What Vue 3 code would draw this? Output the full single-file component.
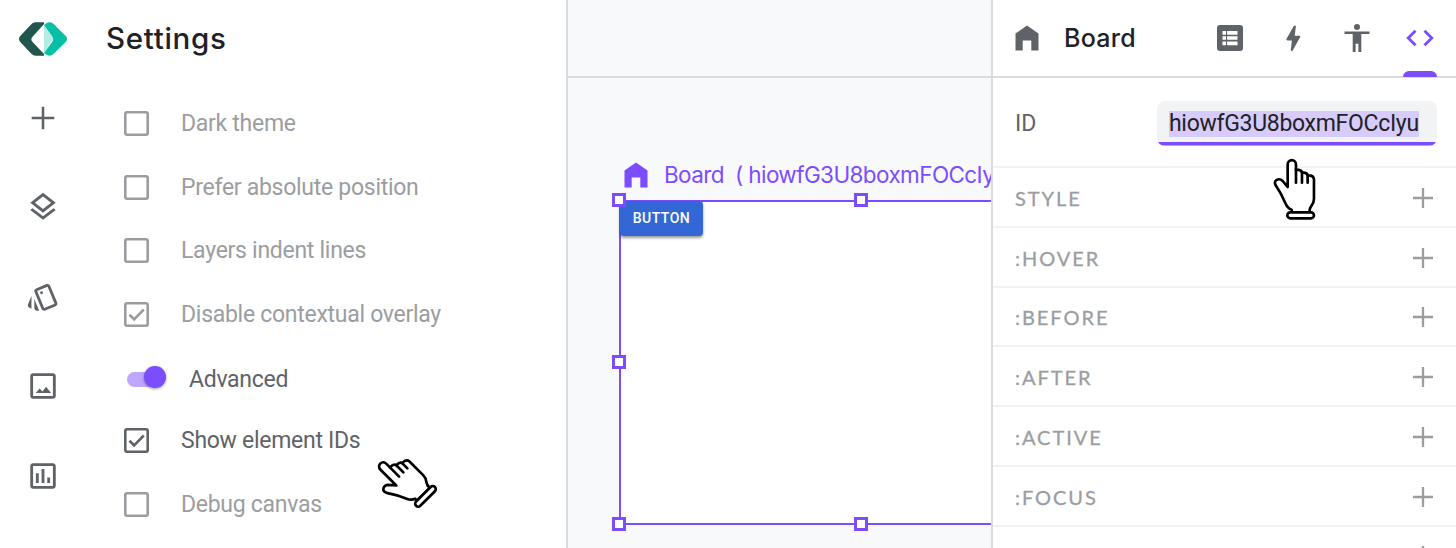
<script setup>
const options = [
  { label: 'Dark theme' },
  { label: 'Prefer absolute position' },
  { label: 'Layers indent lines' },
  { label: 'Disable contextual overlay', checked: true },
  { label: 'Advanced', toggle: true, active: true },
  { label: 'Show element IDs', checked: true, active: true },
  { label: 'Debug canvas' },
]
const sections = ['STYLE', ':HOVER', ':BEFORE', ':AFTER', ':ACTIVE', ':FOCUS', '']
const handles = ['tl', 'tm', 'ml', 'bl', 'bm']
const cursors = ['settings-cursor', 'id-cursor']
</script>

<template>
  <div class="app">
    <nav class="rail">
      <svg class="logo" viewBox="54 64 150 106">
        <path fill="#21564f" d="M132 67H107q-8 0-13 6L60 109q-6 8 0 16l34 36q6 6 13 6h25v-5L97 125q-6-7 0-14l35-39z" />
        <path fill="#b2ece3" d="M132 76l28 41-28 41z" />
        <path fill="#05c0a6" d="M132 75l9-7q11-4 19 3l38 38q6 8 0 16l-38 37q-8 8-19 3l-9-6 24-32q7-9 0-18z" />
      </svg>
      <svg class="icon i1" viewBox="0 0 24 24"><path d="M11.100 4h1.800v7.100H20v1.800h-7.100V20h-1.800v-7.100H4v-1.800h7.100z" /></svg>
      <svg class="icon i2" viewBox="0 0 24 24"><path d="M11.99 18.54l-7.37-5.73L3 14.07l9 7 9-7-1.63-1.27-7.38 5.74zM12 16l7.36-5.73L21 9l-9-7-9 7 1.63 1.27L12 16zm0-11.47L17.74 9 12 13.47 6.26 9 12 4.53z" /></svg>
      <svg class="icon i3" viewBox="0 0 24 24"><path d="M2.53 19.65l1.34.56v-9.03l-2.43 5.86c-.41 1.02.08 2.19 1.09 2.61zm19.5-3.7L17.07 3.98c-.31-.75-1.04-1.21-1.81-1.23-.26 0-.53.04-.79.15L7.1 5.95c-.75.31-1.21 1.03-1.23 1.8-.01.27.04.54.15.8l4.96 11.97c.31.76 1.05 1.22 1.83 1.23.26 0 .52-.05.77-.15l7.36-3.05c1.02-.42 1.51-1.59 1.09-2.6zm-9.2 3.8L7.87 7.79l7.35-3.04h.01l4.95 11.95-7.35 3.05zM11 8a1 1 0 1 0 0 2 1 1 0 0 0 0-2zM5.88 19.75c0 1.1.9 2 2 2h1.45l-3.45-8.34v6.34z" /></svg>
      <svg class="icon i4" viewBox="0 0 24 24"><path d="M19 5v14H5V5h14m0-2H5c-1.1 0-2 .9-2 2v14c0 1.1.9 2 2 2h14c1.1 0 2-.9 2-2V5c0-1.100-.9-2-2-2zM14.200 12.500l-2.600 3.300-2-2.100-2.700 3.300h10.800z" /></svg>
      <svg class="icon i5" viewBox="0 0 24 24"><path d="M19 3H5c-1.100 0-2 .9-2 2v14c0 1.100.9 2 2 2h14c1.100 0 2-.9 2-2V5c0-1.100-.9-2-2-2zm0 16H5V5h14v14zM7 10h2v7H7zm4-3h2v10h-2zm4 6h2v4h-2z" /></svg>
    </nav>

    <section class="settings">
      <h1>Settings</h1>
      <div v-for="o in options" :key="o.label" class="option" :class="{ active: o.active, toggle: o.toggle }">
        <span v-if="o.toggle" class="switch"><i /></span>
        <span v-else class="box">
          <svg v-if="o.checked" viewBox="0 0 25 25"><path d="M5.500 12.800l4.600 4.500L19.800 7.500" /></svg>
        </span>
        <span class="label">{{ o.label }}</span>
      </div>
    </section>

    <main class="workspace">
      <header />
      <div class="canvas">
        <div class="caption">
          <svg viewBox="0 0 24 26"><path d="M12 .5L23.500 8.500V25.500H16.300V15.500H7.700v10H.5v-17z" /></svg>
          <span class="name">Board</span><span class="ref">( hiowfG3U8boxmFOCcIyu )</span>
        </div>
        <div class="frame">
          <button>BUTTON</button>
          <i v-for="h in handles" :key="h" class="handle" :class="h" />
        </div>
      </div>
    </main>

    <aside class="inspector">
      <header>
        <svg class="home" viewBox="0 0 24 26"><path d="M12 .5L23.500 8.500V25.500H16.300V15.500H7.700v10H.5v-17z" /></svg>
        <h2>Board</h2>
        <div class="tabs">
          <span class="tab"><svg class="t-list" viewBox="0 0 26 26"><path fill-rule="evenodd" d="M3 0h20q3 0 3 3v20q0 3-3 3H3q-3 0-3-3V3q0-3 3-3zM5.500 6v3.700H9V6zm4.600 0v3.700h10.400V6zM5.500 11.200v3.600H9v-3.600zm4.600 0v3.600h10.400v-3.600zM5.500 16.500v3.700H9v-3.700zm4.600 0v3.700h10.400v-3.700z" /></svg></span>
          <span class="tab"><svg class="t-bolt" viewBox="0 0 16 28"><path d="M9.500 0q1.200.2 1 1.500L9.300 11h4.900q1.600.2.800 1.600L7.300 26.500q-.6 1-1.600.8-.8-.3-.6-1.300L6.300 16H1.500q-1.800-.2-.9-1.700L8.300.7q.4-.7 1.200-.7z" /></svg></span>
          <span class="tab"><svg class="t-body" viewBox="0 0 26 28"><circle cx="13" cy="3" r="3" /><path d="M.5 7.500h25V10h-8.200v18h-2.900v-8.300h-2.800V28H8.700V10H.5z" /></svg></span>
          <span class="tab current"><svg class="t-code" viewBox="0 0 28 18"><path d="M9.500 1.700L2.200 9l7.300 7.300M18.500 1.700L25.800 9l-7.300 7.300" /></svg></span>
        </div>
      </header>
      <div class="id-row">
        <span class="id-label">ID</span>
        <div class="field"><span>hiowfG3U8boxmFOCcIyu</span></div>
      </div>
      <div v-for="s in sections" :key="s" class="section">
        <span>{{ s }}</span>
        <svg viewBox="0 0 20 20"><path d="M10 0v20M0 10h20" /></svg>
      </div>
    </aside>

    <svg v-for="c in cursors" :key="c" class="cursor" :class="c" viewBox="396 200 136 192">
      <path d="M455 366v-8q-12-4-18-18-14-32-30-55-6-12 4-17 9-4 17 4l15 18V222a12.500 12.500 0 0 1 25 0v16q17 0 18 9 16-1 17 8 18-1 19 12v58q0 12-7 20-7 9-6 21z" />
      <path d="M468 236v41M486 246v31M503 254v23" />
      <rect x="442" y="366" width="80" height="18" rx="9" />
    </svg>
  </div>
</template>

<style>
body { background: #fff; overflow: hidden; }
</style>

<style scoped>
* { box-sizing: border-box; }
.app { position: relative; display: flex; width: 1456px; height: 548px; overflow: hidden; background: #fff; font-family: Roboto, "Liberation Sans", sans-serif; color: #5f6368; }
svg { display: block; flex: none; }
.rail { width: 86px; flex: none; display: flex; flex-direction: column; align-items: center; padding-top: 21px; }
.logo { width: 50px; height: 36px; }
.icon { width: 34px; height: 34px; fill: #5f6368; }
.i1 { margin-top: 44px; }
.i2 { margin-top: 55px; }
.i3 { margin-top: 56px; }
.i4 { margin-top: 55px; }
.i5 { margin-top: 56px; }
.settings { width: 480px; flex: none; padding-left: 38px; }
h1 { margin: 0 0 16px -18px; font: 500 29.500px/76px Inter, sans-serif; color: #202124; letter-spacing: .7px; }
.option { display: flex; align-items: center; height: 63.500px; color: #9b9da1; }
.option.active { color: #5f6368; }
.box { width: 25px; height: 25px; box-shadow: inset 0 0 0 2.600px currentColor; border-radius: 3px; flex: none; }
.box svg { width: 25px; height: 25px; fill: none; stroke: currentColor; stroke-width: 2.600; }
.label { margin-left: 32px; padding-top: 1px; font-size: 23px; line-height: 30px; letter-spacing: -.28px; white-space: nowrap; }
.toggle { height: 63px; padding-top: 3px; }
.toggle .label { margin-left: 24px; }
.switch { width: 38px; height: 15px; margin-left: 3px; border-radius: 8px; background: #bea6ff; display: flex; align-items: center; justify-content: flex-end; }
.switch i { width: 22px; height: 22px; margin: -4px -1px 0 0; border-radius: 50%; background: #7c4dff; box-shadow: 0 1px 3px #0006; }
.workspace { flex: 1; min-width: 0; border-left: 2px solid #dadce2; background: #f8f9fb; }
.workspace header { height: 78px; border-bottom: 2px solid #dadce0; }
.canvas { position: relative; height: 470px; overflow: hidden; }
.caption { position: absolute; left: 56px; top: 82px; height: 30px; display: flex; align-items: center; font: 400 22.500px/30px Inter, sans-serif; letter-spacing: -.6px; color: #7c4dff; white-space: pre; }
.caption svg { width: 24px; height: 26px; fill: #7c4dff; margin-right: 16px; }
.caption .name { width: 71px; }
.frame { position: absolute; left: 51px; top: 122px; width: 484px; height: 325px; border: 2px solid #7c4dff; background: #fff; }
button { display: block; width: 83px; height: 35px; margin: -1px 0 0 -1px; padding: 0; border: 0; border-radius: 4px; background: #3367d6; color: #fff; font: 500 14px/33px Roboto, sans-serif; letter-spacing: .5px; box-shadow: 0 2px 3px #0006; }
.handle { position: absolute; width: 14px; height: 14px; border: 3px solid #7c4dff; background: #fff; }
.tl { left: -9px; top: -9px; }
.tm { left: 233px; top: -9px; }
.ml { left: -9px; top: 153px; }
.bl { left: -9px; top: 315px; }
.bm { left: 233px; top: 315px; }
.inspector { width: 465px; flex: none; border-left: 2px solid #dadce2; background: #fff; }
.inspector header { height: 78px; border-bottom: 2px solid #dadce0; display: flex; align-items: center; padding-left: 22px; }
.home { width: 24px; height: 26px; fill: #5f6368; }
h2 { margin: 0 0 0 25px; width: 139px; font: 500 25px/40px Inter, sans-serif; letter-spacing: .3px; color: #202124; }
.tabs { display: flex; height: 76px; margin-left: -5px; }
.tab { position: relative; width: 63.500px; display: flex; align-items: center; justify-content: center; fill: #5f6368; }
.tab.current::after { content: ""; position: absolute; bottom: -1px; left: 14.500px; width: 34px; height: 6px; border-radius: 6px 6px 0 0; background: #7c4dff; }
.t-list { width: 26px; height: 26px; }
.t-bolt { width: 15px; height: 27px; }
.t-body { width: 26px; height: 28px; }
.t-code { width: 28px; height: 18px; fill: none; stroke: #7c4dff; stroke-width: 2.800; }
.id-row { height: 88px; display: flex; align-items: center; padding: 2px 19px 0 22px; justify-content: space-between; font-size: 23px; }
.field { width: 280px; height: 45px; border-radius: 8px; background: linear-gradient(#7c4dff, #7c4dff) bottom / 100% 3.500px no-repeat #f1f3f5; padding: 9px 12px; color: #202124; }
.field span { display: inline-block; background: #d7cbfb; height: 26px; line-height: 26px; letter-spacing: -.3px; }
.section { height: 59.750px; border-top: 2px solid #f1f2f4; display: flex; align-items: center; justify-content: space-between; padding: 2px 23px 0 22px; font: 400 20px/30px Lato, sans-serif; letter-spacing: 1.950px; color: #9b9da1; -webkit-text-stroke: .3px #9b9da1; }
.section svg { width: 20px; height: 20px; stroke: #9b9da1; stroke-width: 2.300; }
.cursor { position: absolute; width: 45.300px; height: 64px; fill: #fff; stroke: #000; stroke-width: 8; stroke-linejoin: round; stroke-linecap: round; }
.id-cursor { left: 1272px; top: 156.700px; }
.settings-cursor { left: 380.200px; top: 450.300px; transform: rotate(-45deg); }
</style>
